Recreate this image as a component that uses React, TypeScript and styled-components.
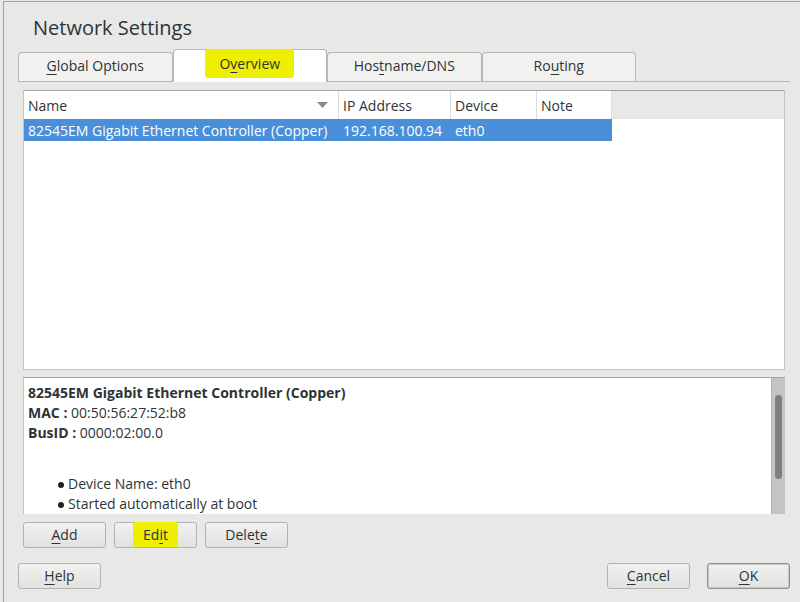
import React from "react";
import styled, { createGlobalStyle } from "styled-components";

const GlobalStyle = createGlobalStyle`
  html, body { margin: 0; padding: 0; background: #e8e8e7; }
  body { font-family: "Open Sans", "Noto Sans", "DejaVu Sans", sans-serif; color: #2e3436; }
  * { box-sizing: border-box; }
`;

const Frame = styled.div`
  width: 800px;
  height: 602px;
  padding: 1px 0 0 3px;
  overflow: hidden;
`;

const Window = styled.div`
  height: 100%;
  border-top: 1px solid #a2a2a2;
  border-left: 1px solid #a2a2a2;
  display: flex;
  flex-direction: column;
`;

const Title = styled.h1`
  margin: 0;
  height: 47px;
  padding: 12px 0 0 29px;
  font-size: 20px;
  line-height: 28px;
  font-weight: 400;
  color: #2e3436;
`;

const TabBar = styled.div`
  display: flex;
  align-items: flex-end;
  height: 33px;
  margin: 0 10px 0 14px;
  border-bottom: 1px solid #b6b6b4;
`;

const Tab = styled.div<{ $active?: boolean }>`
  flex: 0 0 154.5px;
  height: ${(p) => (p.$active ? "33px" : "29px")};
  margin-bottom: ${(p) => (p.$active ? "-1px" : "0")};
  background: ${(p) => (p.$active ? "#ffffff" : "#f1f1f0")};
  border: 1px solid #b6b6b4;
  border-bottom: none;
  border-radius: 4px 4px 0 0;
  display: flex;
  align-items: center;
  justify-content: center;
  font-size: 14px;
  padding-bottom: ${(p) => (p.$active ? "6px" : "3px")};
`;

const Marker = styled.span<{ $px: number; $py: number }>`
  background: #efef00;
  padding: ${(p) => `${p.$py}px ${p.$px}px`};
  border-radius: 3px;
`;

const Mn = styled.span`
  text-decoration: underline;
  text-underline-offset: 3px;
  text-decoration-thickness: 1px;
`;

const Table = styled.div`
  margin: 8px 15px 0 19px;
  height: 280px;
  background: #ffffff;
  border: 1px solid #c4c4c2;
  border-top-color: #a4a4a2;
  display: grid;
  grid-template-columns: 315px 112px 86px 75px 1fr;
  grid-template-rows: 28px 22px 1fr;
  font-size: 14px;
`;

const HeadCell = styled.div<{ $filler?: boolean }>`
  display: flex;
  align-items: center;
  justify-content: space-between;
  padding: 0 10px 0 4px;
  background: ${(p) => (p.$filler ? "#e8e8e7" : "#ffffff")};
  border-right: ${(p) => (p.$filler ? "none" : "1px solid #dcdcda")};
  white-space: nowrap;
`;

const Cell = styled.div<{ $selected?: boolean }>`
  display: flex;
  align-items: center;
  padding-left: 4px;
  background: ${(p) => (p.$selected ? "#4a8fd9" : "#ffffff")};
  color: ${(p) => (p.$selected ? "#ffffff" : "#2e3436")};
  white-space: nowrap;
  overflow: hidden;
`;

const Details = styled.div`
  margin: 7px 15px 0 19px;
  height: 137px;
  background: #ffffff;
  border-top: 1px solid #a4a4a2;
  border-left: 1px solid #c4c4c2;
  display: flex;
`;

const DetailsBody = styled.div`
  flex: 1;
  padding: 5px 0 0 4px;
  font-size: 14px;
  line-height: 20px;
  overflow: hidden;
`;

const Line = styled.div``;

const Bold = styled.b`
  font-weight: 700;
`;

const List = styled.ul`
  list-style: none;
  margin: 31px 0 0;
  padding: 0 0 0 40px;
`;

const Item = styled.li`
  position: relative;
  &::before {
    content: "";
    position: absolute;
    left: -10px;
    top: 8px;
    width: 6px;
    height: 6px;
    border-radius: 50%;
    background: #1e2224;
  }
`;

const ScrollTrack = styled.div`
  width: 14px;
  background: #c4c5c2;
  border-left: 1px solid #b4b5b2;
  padding: 17px 0 0 3px;
`;

const ScrollThumb = styled.div`
  width: 7px;
  height: 84px;
  border-radius: 4px;
  background: #7e807d;
`;

const ButtonRow = styled.div<{ $left: number; $top: number }>`
  display: flex;
  gap: 8px;
  margin: ${(p) => `${p.$top}px 0 0 ${p.$left}px`};
`;

const BottomRow = styled.div`
  display: flex;
  align-items: center;
  margin: 15px 10px 0 14px;
`;

const Spacer = styled.div<{ $w?: number }>`
  flex: ${(p) => (p.$w ? `0 0 ${p.$w}px` : "1")};
`;

const Button = styled.button<{ $default?: boolean }>`
  width: 83px;
  height: 26px;
  padding: 0 0 1px;
  font-family: inherit;
  font-size: 14px;
  color: #2e3436;
  border: 1px solid ${(p) => (p.$default ? "#8e8e8c" : "#b2b2b0")};
  border-radius: 3px;
  background: linear-gradient(#f1f1f0, #e1e1df);
  box-shadow: ${(p) => (p.$default ? "inset 0 0 0 1px #c8c8c6" : "none")};
  display: flex;
  align-items: center;
  justify-content: center;
`;

const SortArrow = () => (
  <svg width="11" height="6" viewBox="0 0 11 6">
    <path d="M0 0 L11 0 L5.5 6 Z" fill="#8a8d8e" />
  </svg>
);

export default function App() {
  return (
    <>
      <GlobalStyle />
      <Frame>
        <Window>
          <Title>Network Settings</Title>
          <TabBar>
            <Tab>
              <span>
                <Mn>G</Mn>lobal Options
              </span>
            </Tab>
            <Tab $active>
              <Marker $px={14} $py={5}>
                O<Mn>v</Mn>erview
              </Marker>
            </Tab>
            <Tab>
              <span>
                Hos<Mn>t</Mn>name/DNS
              </span>
            </Tab>
            <Tab>
              <span>
                Ro<Mn>u</Mn>ting
              </span>
            </Tab>
          </TabBar>
          <Table>
            <HeadCell>
              Name
              <SortArrow />
            </HeadCell>
            <HeadCell>IP Address</HeadCell>
            <HeadCell>Device</HeadCell>
            <HeadCell>Note</HeadCell>
            <HeadCell $filler />
            <Cell $selected>82545EM Gigabit Ethernet Controller (Copper)</Cell>
            <Cell $selected>192.168.100.94</Cell>
            <Cell $selected>eth0</Cell>
            <Cell $selected></Cell>
            <Cell></Cell>
          </Table>
          <Details>
            <DetailsBody>
              <Line>
                <Bold>82545EM Gigabit Ethernet Controller (Copper)</Bold>
              </Line>
              <Line>
                <Bold>MAC :</Bold> 00:50:56:27:52:b8
              </Line>
              <Line>
                <Bold>BusID :</Bold> 0000:02:00.0
              </Line>
              <List>
                <Item>Device Name: eth0</Item>
                <Item>Started automatically at boot</Item>
              </List>
            </DetailsBody>
            <ScrollTrack>
              <ScrollThumb />
            </ScrollTrack>
          </Details>
          <ButtonRow $left={19} $top={8}>
            <Button>
              <Mn>A</Mn>dd
            </Button>
            <Button>
              <Marker $px={10} $py={3}>
                Ed<Mn>i</Mn>t
              </Marker>
            </Button>
            <Button>
              Dele<Mn>t</Mn>e
            </Button>
          </ButtonRow>
          <BottomRow>
            <Button>
              <Mn>H</Mn>elp
            </Button>
            <Spacer />
            <Button>
              <Mn>C</Mn>ancel
            </Button>
            <Spacer $w={17} />
            <Button $default>
              <Mn>O</Mn>K
            </Button>
          </BottomRow>
        </Window>
      </Frame>
    </>
  );
}
